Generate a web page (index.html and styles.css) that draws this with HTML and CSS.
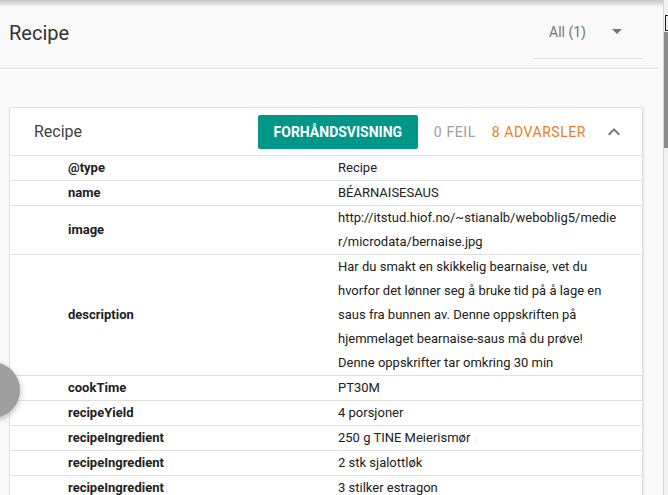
FILE: index.html
```html
<!DOCTYPE html>
<html lang="no">
<head>
<meta charset="utf-8">
<title>Recipe</title>
<link rel="stylesheet" href="styles.css">
</head>
<body>
<div class="frame">
  <div class="main">
    <div class="top-shadow"></div>
    <header class="page-header">
      <h1 class="page-title">Recipe</h1>
      <div class="dropdown">
        <span class="dropdown-label">All (1)</span>
        <svg class="dropdown-icon" viewBox="0 0 24 24" width="24" height="24"><path d="M7 10l5 5 5-5z"/></svg>
      </div>
    </header>
    <section class="card">
      <div class="card-head">
        <span class="card-title">Recipe</span>
        <button class="btn-preview">FORHÅNDSVISNING</button>
        <span class="count-errors">0 FEIL</span>
        <span class="count-warnings">8 ADVARSLER</span>
        <svg class="collapse-icon" viewBox="0 0 24 24" width="24" height="24"><path d="M12 8l-6 6 1.41 1.41L12 10.83l4.59 4.58L18 14z"/></svg>
      </div>
      <div class="props">
        <div class="row"><div class="key">@type</div><div class="val">Recipe</div></div>
        <div class="row"><div class="key">name</div><div class="val">BÉARNAISESAUS</div></div>
        <div class="row"><div class="key">image</div><div class="val">http://itstud.hiof.no/~stianalb/weboblig5/medier/microdata/bernaise.jpg</div></div>
        <div class="row"><div class="key">description</div><div class="val">Har du smakt en skikkelig bearnaise, vet du hvorfor det lønner seg å bruke tid på å lage en saus fra bunnen av. Denne oppskriften på hjemmelaget bearnaise-saus må du prøve! Denne oppskrifter tar omkring 30 min</div></div>
        <div class="row"><div class="key">cookTime</div><div class="val">PT30M</div></div>
        <div class="row"><div class="key">recipeYield</div><div class="val">4 porsjoner</div></div>
        <div class="row"><div class="key">recipeIngredient</div><div class="val">250 g TINE Meierismør</div></div>
        <div class="row"><div class="key">recipeIngredient</div><div class="val">2 stk sjalottløk</div></div>
        <div class="row"><div class="key">recipeIngredient</div><div class="val">3 stilker estragon</div></div>
        <div class="row"><div class="key">recipeIngredient</div><div class="val">1 dl hvitvinseddik</div></div>
      </div>
    </section>
    <div class="fab"></div>
  </div>
  <div class="scrollbar">
    <div class="scroll-btn"></div>
    <div class="scroll-thumb"></div>
  </div>
</div>
</body>
</html>
```
FILE: styles.css
```css
html, body {
  margin: 0;
  padding: 0;
  height: 100%;
  overflow: hidden;
}
body {
  background: #f9f9f9;
  font-family: Roboto, "Liberation Sans", Arial, sans-serif;
  color: #212121;
}
.frame {
  display: flex;
  height: 495px;
  overflow: hidden;
}
.main {
  position: relative;
  width: 663px;
  flex: none;
}
.top-shadow {
  position: absolute;
  left: 0;
  right: 0;
  top: 0;
  height: 7px;
  background: linear-gradient(to bottom, #c4c4c4, rgba(249,249,249,0));
}
.page-header {
  width: 659px;
  height: 68px;
  border-bottom: 1px solid #e0e0e0;
  display: flex;
  align-items: center;
  box-sizing: content-box;
}
.page-title {
  margin: 0 0 0 9px;
  font-size: 20px;
  font-weight: 400;
  color: #333;
  flex: 1;
  padding-bottom: 3px;
}
.dropdown {
  width: 110px;
  height: 35px;
  margin-right: 16px;
  margin-top: 14px;
  border-bottom: 1px solid #e0e0e0;
  display: flex;
  align-items: flex-start;
  box-sizing: border-box;
  padding-left: 16px;
}
.dropdown-label {
  font-size: 14px;
  color: #757575;
  line-height: 36px;
  margin-top: -10px;
}
.dropdown-icon {
  fill: #757575;
  margin-left: auto;
  margin-right: 14px;
  margin-top: -5px;
}
.card {
  margin: 38px 20px 0 9px;
  background: #fff;
  border: 1px solid #e0e0e0;
  box-shadow: 1px 1px 2px rgba(0,0,0,0.08);
}
.card-head {
  height: 47px;
  display: flex;
  align-items: center;
  padding: 0 16px 0 24px;
  border-bottom: 1px solid #e0e0e0;
}
.card-title {
  font-size: 16px;
  color: #424242;
  flex: 1;
}
.btn-preview {
  width: 160px;
  height: 34px;
  background: #009688;
  color: #fff;
  border: none;
  border-radius: 2px;
  font-family: Roboto, "Liberation Sans", Arial, sans-serif;
  font-size: 14px;
  font-weight: 700;
  padding: 0;
  margin-top: 1px;
}
.count-errors {
  margin-left: 16px;
  font-size: 14px;
  color: #9e9e9e;
  letter-spacing: 0.6px;
}
.count-warnings {
  margin-left: 16px;
  font-size: 14px;
  color: #e67e22;
  letter-spacing: 0.55px;
}
.collapse-icon {
  fill: #757575;
  margin-left: 16px;
}
.props {
  font-size: 13px;
}
.row {
  display: grid;
  grid-template-columns: 328px 1fr;
  border-bottom: 1px solid #e0e0e0;
  line-height: 24px;
}
.key {
  padding-left: 58px;
  font-weight: 700;
  font-size: 13px;
  color: #212121;
  display: flex;
  align-items: center;
}
.val {
  padding-right: 23px;
  color: #212121;
  overflow-wrap: anywhere;
}
.fab {
  position: absolute;
  left: -36px;
  top: 362px;
  width: 56px;
  height: 56px;
  border-radius: 50%;
  background: #9e9e9e;
  box-shadow: 0 2px 6px rgba(0,0,0,0.3);
}
.scrollbar {
  flex: none;
  width: 5px;
  background: #f1f1f1;
  border-left: 1px solid #d6d6d6;
  box-sizing: border-box;
  position: relative;
}
.scroll-btn {
  position: absolute;
  top: 15px;
  left: 1px;
  width: 4px;
  height: 16px;
  border: 1px solid #222;
  border-right: none;
  background: #eee;
  box-sizing: border-box;
}
.scroll-thumb {
  position: absolute;
  top: 32px;
  left: 0;
  width: 4px;
  height: 116px;
  background: #8c8c8c;
}
```
